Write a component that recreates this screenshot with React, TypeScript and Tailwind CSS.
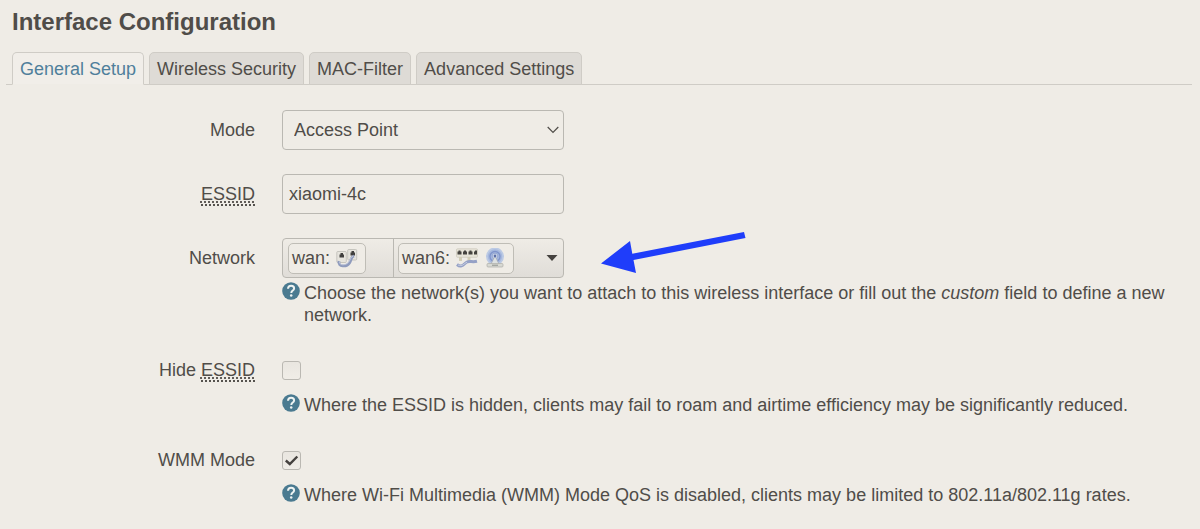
import { useId, useState, type ReactNode } from "react";

const TABS = ["General Setup", "Wireless Security", "MAC-Filter", "Advanced Settings"];

function Essid() {
    return (
        <abbr
            title="Extended Service Set Identifier"
            className="border-b-2 border-dotted border-[#55524e] leading-[18px] underline decoration-dotted underline-offset-2"
        >
            ESSID
        </abbr>
    );
}

function HelpIcon() {
    return (
        <svg viewBox="0 0 18 18" className="h-[18px] w-[18px] shrink-0" aria-hidden="true">
            <circle cx="9" cy="9" r="8.8" fill="#4a7a90" />
            <path
                d="M6 6.700C6.100 4.800 7.400 3.800 9.100 3.800c1.800 0 3 1 3 2.600 0 2.100-2.800 2.300-2.800 4.500"
                fill="none"
                stroke="#eef3f2"
                strokeWidth="2"
            />
            <circle cx="9.2" cy="13.4" r="1.25" fill="#eef3f2" />
        </svg>
    );
}

// Two wall sockets joined by a cable
function EthernetIcon() {
    return (
        <svg viewBox="0 0 22 20" className="h-5 w-[22px]" aria-hidden="true">
            <rect x="0.800" y="3.500" width="9.500" height="11" rx="1" fill="#e6e4dd" stroke="#bdbbb5" strokeWidth="0.800" />
            <rect x="11.700" y="1.500" width="9" height="10.500" rx="1" fill="#e6e4dd" stroke="#bdbbb5" strokeWidth="0.800" />
            <path d="M3.500 9.500V6.500h1V5h2.500v1.500h1v3z" fill="#403f3e" />
            <path d="M14.500 7.500V4.500h1V3H18v1.500h1v3z" fill="#403f3e" />
            <path d="M3 13c-1.500 6.500 8 6 10.500 2s1-6 4.500-7" fill="none" stroke="#8f9bbd" strokeWidth="2.800" />
            <path d="M3.500 13.500c-.5 4.500 6.500 4 9 .8s1.500-5 4.500-6" fill="none" stroke="#c3cadc" strokeWidth="1" />
        </svg>
    );
}

// Four port switch with a patch cable
function SwitchIcon() {
    return (
        <svg viewBox="0 0 22 20" className="h-5 w-[22px]" aria-hidden="true">
            <rect x="0.500" y="0.800" width="21" height="8.500" rx="1" fill="#e7e4d8" stroke="#cbc7ba" strokeWidth="0.700" />
            <path
                d="M1.500 6.500v-3h1v-1h2v1h1v3zM7 6.500v-3h1v-1h2v1h1v3zM12.500 6.500v-3h1v-1h2v1h1v3zM18 6.500v-3h1v-1h2v4z"
                fill="#45433f"
            />
            <path d="M4.500 9v4M13 9v4" stroke="#d2ceb8" strokeWidth="3" />
            <path d="M1 16.500c5 4 7-1 10-2.500s5 .5 10-.8" fill="none" stroke="#95a1c6" strokeWidth="3" />
            <path d="M2 17c4.500 2 6-1.500 9-2.800" fill="none" stroke="#c6cde0" strokeWidth="1" />
        </svg>
    );
}

function WirelessIcon() {
    return (
        <svg viewBox="0 0 22 20" className="h-5 w-[22px]" aria-hidden="true">
            <circle cx="11" cy="8.500" r="9" fill="#bccae4" />
            <circle cx="11" cy="8.500" r="7.200" fill="#a6b8de" />
            <circle cx="11" cy="8.500" r="5" fill="none" stroke="#7f94cb" strokeWidth="1.300" />
            <circle cx="11" cy="8" r="2.800" fill="#dbe4f1" stroke="#8a9dcc" strokeWidth="0.800" />
            <path d="M11 8l-4.500 9h9z" fill="#dde1e1" stroke="#a3a9b3" strokeWidth="0.700" />
            <circle cx="11" cy="8" r="1.400" fill="#5d6fa8" />
            <rect x="3" y="15.500" width="16" height="3.500" rx="1" fill="#d8d9d3" stroke="#adaea8" strokeWidth="0.700" />
            <path d="M8 17.200h6" stroke="#8d918f" strokeWidth="1" />
        </svg>
    );
}

function NetworkBadge({ name, children }: { name: string; children: ReactNode }) {
    return (
        <span className="flex h-[31px] items-center gap-1.5 rounded-[5px] border border-[#bfbdb6] bg-[#efece6] pr-[7px] pl-[3px]">
            {name}:{children}
        </span>
    );
}

interface FieldProps {
    id: string;
    label: ReactNode;
    help?: ReactNode;
    children: ReactNode;
}

function Field({ id, label, help, children }: FieldProps) {
    return (
        <div className="flex gap-[27px]">
            <label htmlFor={id} className="w-[249px] shrink-0 text-right leading-10">
                {label}
            </label>
            <div className="min-w-0 flex-1">
                <div className="flex h-10 items-center">{children}</div>
                {help && (
                    <div className="mt-1 flex gap-1 leading-[22px]">
                        <HelpIcon />
                        <p>{help}</p>
                    </div>
                )}
            </div>
        </div>
    );
}

function Checkbox({ id, defaultChecked }: { id: string; defaultChecked?: boolean }) {
    return (
        <span className="relative flex">
            <input
                id={id}
                type="checkbox"
                defaultChecked={defaultChecked}
                className="peer h-[19px] w-[19px] appearance-none rounded-[3px] border border-[#bab8b2] bg-linear-to-b from-[#e9e6e0] to-[#f0ede7]"
            />
            <svg
                viewBox="0 0 19 19"
                className="pointer-events-none absolute inset-0 hidden h-[19px] w-[19px] peer-checked:block"
                aria-hidden="true"
            >
                <path d="M3.800 9.500l4 3.500L15.300 5.500" fill="none" stroke="#45423f" strokeWidth="2.400" />
            </svg>
        </span>
    );
}

export default function App() {
    const [activeTab, setActiveTab] = useState(TABS[0]);
    const id = useId();

    return (
        <main className="min-h-screen bg-[#efece6] pt-2 pr-2 pb-5 pl-1.5 font-['Liberation_Sans',Arial,sans-serif] text-[18px] text-[#504d49]">
            <h1 className="pl-1.5 text-2xl leading-7 font-bold">Interface Configuration</h1>

            <div role="tablist" className="mt-4 flex gap-[5px] border-b border-[#cfccc6] pl-1.5">
                {TABS.map((tab) => (
                    <button
                        key={tab}
                        type="button"
                        role="tab"
                        aria-selected={tab === activeTab}
                        onClick={() => setActiveTab(tab)}
                        className={`-mb-px h-[33px] rounded-t-[5px] border px-[7px] pt-0.5 whitespace-nowrap ${
                            tab === activeTab
                                ? "border-[#cfccc6] border-b-[#efece6] bg-[#f1eee9] text-[#4f7f9b]"
                                : "border-[#cfccc6] bg-[#dedbd6]"
                        }`}
                    >
                        {tab}
                    </button>
                ))}
            </div>

            <form className="mt-[25px] flex flex-col gap-6">
                <Field id={`${id}-mode`} label="Mode">
                    <div className="relative h-10 w-[282px]">
                        <select
                            id={`${id}-mode`}
                            className="h-full w-full appearance-none rounded-[4px] border border-[#bab8b2] bg-transparent px-[11px]"
                        >
                            <option>Access Point</option>
                            <option>Client</option>
                            <option>Ad-Hoc</option>
                        </select>
                        <svg
                            viewBox="0 0 12 8"
                            className="pointer-events-none absolute top-4 right-[5px] h-2 w-3"
                            aria-hidden="true"
                        >
                            <path d="M0.700 1L6 6.500 11.300 1" fill="none" stroke="#504d49" strokeWidth="1.200" />
                        </svg>
                    </div>
                </Field>

                <Field id={`${id}-essid`} label={<Essid />}>
                    <input
                        id={`${id}-essid`}
                        type="text"
                        defaultValue="xiaomi-4c"
                        className="h-10 w-[282px] rounded-[4px] border border-[#bab8b2] bg-transparent px-1.5"
                    />
                </Field>

                <Field
                    id={`${id}-network`}
                    label="Network"
                    help={
                        <>
                            Choose the network(s) you want to attach to this wireless interface or fill out the{" "}
                            <em>custom</em> field to define a new network.
                        </>
                    }
                >
                    <div className="relative">
                        <button
                            id={`${id}-network`}
                            type="button"
                            aria-haspopup="listbox"
                            className="flex h-10 w-[282px] items-stretch rounded-[4px] border border-[#bab8b2] bg-linear-to-b from-[#efece6] to-[#e0ddd8]"
                        >
                            <span className="flex w-[111px] items-center border-r border-[#bab8b2] pl-[5px]">
                                <NetworkBadge name="wan">
                                    <EthernetIcon />
                                </NetworkBadge>
                            </span>
                            <span className="flex flex-1 items-center pl-1">
                                <NetworkBadge name="wan6">
                                    <SwitchIcon />
                                    <WirelessIcon />
                                </NetworkBadge>
                            </span>
                            <svg viewBox="0 0 12 6" className="mr-[5px] h-1.5 w-3 self-center" aria-hidden="true">
                                <path d="M0.500 0h11L6 6z" fill="#45423f" />
                            </svg>
                        </button>
                        {/* Hint arrow pointing at the drop-down */}
                        <svg
                            viewBox="0 0 146 44"
                            className="pointer-events-none absolute -top-[7px] left-[319px] h-11 w-[146px]"
                            aria-hidden="true"
                        >
                            <path d="M0 32.500L29 10l2.300 12.800L143 1l1.500 6L32.500 29 35 42z" fill="#1f3dfa" />
                        </svg>
                    </div>
                </Field>

                <Field
                    id={`${id}-hide`}
                    label={
                        <>
                            Hide <Essid />
                        </>
                    }
                    help="Where the ESSID is hidden, clients may fail to roam and airtime efficiency may be significantly reduced."
                >
                    <Checkbox id={`${id}-hide`} />
                </Field>

                <Field
                    id={`${id}-wmm`}
                    label="WMM Mode"
                    help="Where Wi-Fi Multimedia (WMM) Mode QoS is disabled, clients may be limited to 802.11a/802.11g rates."
                >
                    <Checkbox id={`${id}-wmm`} defaultChecked />
                </Field>
            </form>
        </main>
    );
}
